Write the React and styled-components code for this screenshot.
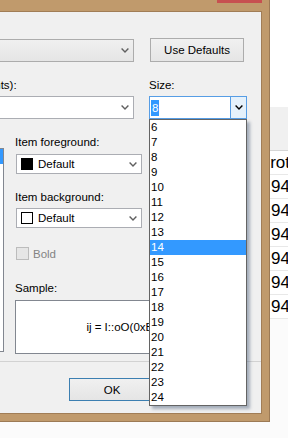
import React from 'react';
import styled, { createGlobalStyle, css } from 'styled-components';

const GlobalStyle = createGlobalStyle`
  html, body {
    margin: 0;
    padding: 0;
    background: #fbfbfb;
  }
  body {
    font-family: "Liberation Sans", Arial, sans-serif;
    font-size: 11.5px;
    color: #000;
  }
`;

const Screen = styled.div`
  width: 288px;
  height: 438px;
  overflow: hidden;
  display: flex;
  align-items: flex-start;
  background: #fbfbfb;
`;

const Window = styled.div`
  position: relative;
  z-index: 1;
  flex: none;
  margin-left: -222px;
  width: 492px;
  height: 422px;
  box-sizing: border-box;
  display: flex;
  flex-direction: column;
  padding: 0 7px 7px 7px;
  background: #c09a6c;
  border: 1px solid #9c7a55;
  border-top: 0;
`;

const TitleBar = styled.div`
  height: 11px;
  display: flex;
  justify-content: flex-end;
  align-items: flex-start;
`;

const CloseButton = styled.div`
  width: 45px;
  height: 3px;
  background: #c75050;
`;

const Body = styled.div`
  flex: 1;
  display: flex;
  flex-direction: column;
  background: #f0f0f0;
  border: 1px solid #a17d56;
`;

const Page = styled.div`
  display: flex;
  flex-direction: column;
  padding: 10px 14px 0 11px;
`;

const Label = styled.div`
  line-height: 15px;
  white-space: nowrap;
  color: ${p => (p.$disabled ? '#838383' : '#000')};
`;

const Columns = styled.div`
  display: grid;
  grid-template-columns: 336px 98px;
  column-gap: 15px;
  align-items: end;
  margin-top: ${p => p.$top || 0}px;
`;

const Combo = styled.div`
  box-sizing: border-box;
  display: flex;
  align-items: center;
  height: ${p => p.$h || 23}px;
  width: ${p => (p.$w ? `${p.$w}px` : 'auto')};
  margin-left: ${p => p.$inset || 0}px;
  border: 1px solid #acacac;
  background: linear-gradient(#f0f0f0, #e5e5e5);
  white-space: nowrap;
  ${p => p.$edit && css`
    border-color: #abadb3;
    background: #fff;
  `}
  ${p => p.$focus && css`
    border-color: #569de5;
    background: #fff;
  `}
`;

const ComboText = styled.span`
  flex: 1;
  display: flex;
  align-items: center;
  gap: 5px;
  padding-left: ${p => p.$pad ?? 3}px;
  overflow: hidden;
`;

const DropArea = styled.span`
  flex: none;
  width: 17px;
  align-self: stretch;
  display: flex;
  align-items: center;
  justify-content: center;
  ${p => p.$focus && css`
    width: 15px;
    background: #e5f1fb;
    border-left: 1px solid #569de5;
  `}
`;

const Selected = styled.span`
  background: #3399ff;
  color: #fff;
  padding: 1px 1px;
  line-height: 14px;
`;

const Swatch = styled.span`
  width: 12px;
  height: 12px;
  box-sizing: border-box;
  background: ${p => p.$color};
  border: 1px solid #000;
`;

const PushButton = styled.div`
  box-sizing: border-box;
  width: ${p => p.$w || 86}px;
  height: ${p => p.$h || 23}px;
  margin-left: ${p => p.$inset || 0}px;
  display: flex;
  align-items: center;
  justify-content: center;
  border: 1px solid ${p => (p.$default ? '#3c7fb1' : '#acacac')};
  background: linear-gradient(#f0f0f0, #e5e5e5);
  white-space: nowrap;
`;

const SizeField = styled.div`
  position: relative;
`;

const DropList = styled.div`
  position: absolute;
  z-index: 10;
  top: 100%;
  left: 0;
  width: 98px;
  box-sizing: border-box;
  border: 1px solid #646464;
  background: #fff;
  box-shadow: 3px 3px 3px rgba(70, 90, 120, 0.45);
`;

const DropItem = styled.div`
  height: 15px;
  line-height: 15px;
  padding-left: 1px;
  ${p => p.$active && css`
    background: #3399ff;
    color: #fff;
  `}
`;

const Middle = styled.div`
  display: grid;
  grid-template-columns: 206px 232px;
  column-gap: 11px;
  margin-top: 16px;
`;

const ItemList = styled.div`
  margin-top: 13px;
  height: 204px;
  box-sizing: border-box;
  border: 1px solid #828790;
  background: #fff;
  overflow: hidden;
`;

const ListItem = styled.div`
  height: 15px;
  line-height: 15px;
  padding-left: 3px;
  white-space: nowrap;
  ${p => p.$active && css`
    background: #3399ff;
    color: #fff;
  `}
`;

const Settings = styled.div`
  display: flex;
  flex-direction: column;
`;

const Stack = styled.div`
  display: flex;
  flex-direction: column;
  margin-top: ${p => p.$top || 0}px;
  gap: ${p => p.$gap || 0}px;
`;

const CheckRow = styled.label`
  display: flex;
  align-items: center;
  gap: 4px;
  margin: 19px 0 0 1px;
  height: 13px;
  color: #838383;
`;

const CheckBox = styled.span`
  width: 13px;
  height: 13px;
  box-sizing: border-box;
  border: 1px solid #bcbcbc;
  background: #e6e6e6;
`;

const SampleBox = styled.div`
  margin-top: 2px;
  height: 54px;
  box-sizing: border-box;
  border: 1px solid #828790;
  background: #fff;
  display: flex;
  align-items: center;
  justify-content: center;
  white-space: nowrap;
`;

const Separator = styled.div`
  margin-top: 7px;
  height: 1px;
  background: #d2d2d2;
`;

const Footer = styled.div`
  display: flex;
  justify-content: flex-end;
  gap: 6px;
  padding: 16px 14px 0 0;
`;

const BackWindow = styled.div`
  position: relative;
  z-index: 0;
  flex: 1;
  margin-left: -40px;
  padding-top: 107px;
  background: #fff;
  font-size: 17px;
`;

const Toolbar = styled.div`
  height: 43px;
  background: #f0f0f0;
  border-bottom: 1px solid #d5d5d5;
`;

const HeadCell = styled.div`
  width: 120px;
  height: 23px;
  line-height: 23px;
  text-align: center;
  white-space: nowrap;
  border-bottom: 1px solid #e8e8e8;
`;

const DataRow = styled.div`
  height: 23px;
  line-height: 23px;
  padding-left: 41px;
  border-bottom: 1px solid #e8e8e8;
  white-space: nowrap;
`;

const Chevron = ({ color = '#5f5f5f' }) => (
  <svg width="8" height="5" viewBox="0 0 8 5">
    <path d="M0.6 0.6 L4 4 L7.4 0.6" fill="none" stroke={color} strokeWidth="1.4" />
  </svg>
);

const sizes = Array.from({ length: 19 }, (_, i) => i + 6);

const displayItems = [
  'Plain Text',
  'Selected Text',
  'Inactive Selected Text',
  'Indicator Margin',
  'Line Numbers',
  'Visible White Space',
  'Bookmark',
  'Brace Matching (Highlight)',
  'Brace Matching (Rectangle)',
  'Breakpoint (Disabled)',
  'Breakpoint (Enabled)',
  'Breakpoint (Error)',
  'Call Return',
];

export default function App() {
  return (
    <>
      <GlobalStyle />
      <Screen>
        <Window>
          <TitleBar>
            <CloseButton />
          </TitleBar>
          <Body>
            <Page>
              <Label>Show settings for:</Label>
              <Columns $top={1}>
                <Combo>
                  <ComboText>Text Editor</ComboText>
                  <DropArea><Chevron /></DropArea>
                </Combo>
                <PushButton $w={94} $h={24} $inset={1}>Use Defaults</PushButton>
              </Columns>
              <Columns $top={16}>
                <Label>Font (bold type indicates fixed-width fonts):</Label>
                <Label>Size:</Label>
              </Columns>
              <Columns $top={3}>
                <Combo $edit>
                  <ComboText>Consolas</ComboText>
                  <DropArea><Chevron /></DropArea>
                </Combo>
                <SizeField>
                  <Combo $focus>
                    <ComboText $pad={1}><Selected>8</Selected></ComboText>
                    <DropArea $focus><Chevron color="#000" /></DropArea>
                  </Combo>
                  <DropList>
                    {sizes.map(s => (
                      <DropItem key={s} $active={s === 14}>{s}</DropItem>
                    ))}
                  </DropList>
                </SizeField>
              </Columns>
              <Middle>
                <ItemList>
                  {displayItems.map((item, i) => (
                    <ListItem key={item} $active={i === 0}>{item}</ListItem>
                  ))}
                </ItemList>
                <Settings>
                  <Stack $gap={4}>
                    <Label>Item foreground:</Label>
                    <Combo $edit $h={20} $w={126} $inset={1}>
                      <ComboText $pad={4}><Swatch $color="#000" />Default</ComboText>
                      <DropArea><Chevron /></DropArea>
                    </Combo>
                  </Stack>
                  <Stack $top={16} $gap={3}>
                    <Label>Item background:</Label>
                    <Combo $edit $h={20} $w={126} $inset={1}>
                      <ComboText $pad={4}><Swatch $color="#fff" />Default</ComboText>
                      <DropArea><Chevron /></DropArea>
                    </Combo>
                  </Stack>
                  <CheckRow>
                    <CheckBox />
                    Bold
                  </CheckRow>
                  <Stack $top={21} $gap={2}>
                    <Label>Sample:</Label>
                    <SampleBox>ij = I::oO(0xB81l);</SampleBox>
                  </Stack>
                </Settings>
              </Middle>
            </Page>
            <Separator />
            <Footer>
              <PushButton $default>OK</PushButton>
              <PushButton>Cancel</PushButton>
            </Footer>
          </Body>
        </Window>
        <BackWindow>
          <Toolbar />
          <HeadCell>Protocol</HeadCell>
          {[0, 1, 2, 3, 4, 5].map(i => (
            <DataRow key={i}>94</DataRow>
          ))}
        </BackWindow>
      </Screen>
    </>
  );
}
